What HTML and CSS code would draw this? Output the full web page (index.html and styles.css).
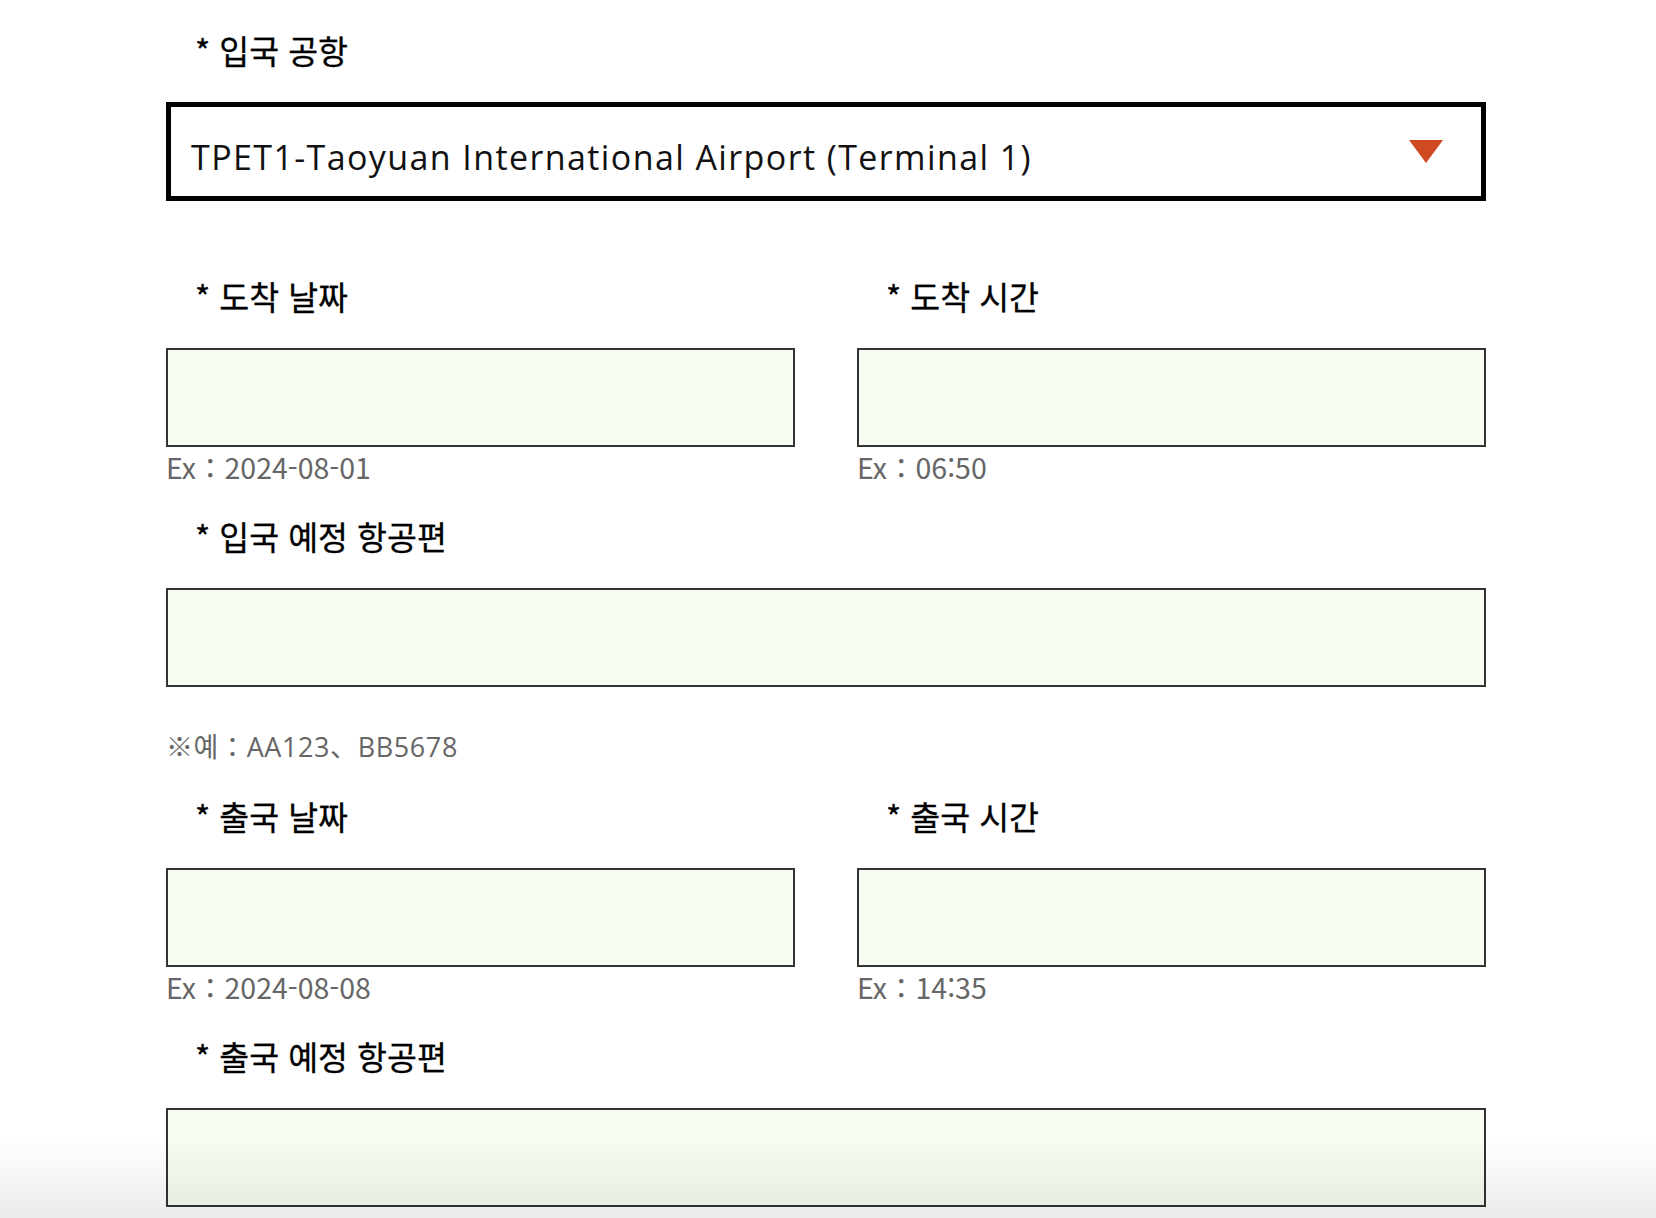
FILE: index.html
```html
<!DOCTYPE html>
<html lang="ko">
<head>
<meta charset="utf-8">
<title>입국 정보</title>
<link rel="stylesheet" href="styles.css">
</head>
<body>
<div class="form">
  <div class="field field-select">
    <div class="label">* 입국 공항</div>
    <div class="select">
      <span class="select-text">TPET1-Taoyuan International Airport (Terminal 1)</span>
      <svg class="arrow" width="34" height="23" viewBox="0 0 34 23"><polygon points="0,0 34,0 17,23" fill="#cf4a22"/></svg>
    </div>
  </div>

  <div class="row">
    <div class="field">
      <div class="label">* 도착 날짜</div>
      <div class="input"></div>
      <div class="hint">Ex：2024-08-01</div>
    </div>
    <div class="field">
      <div class="label">* 도착 시간</div>
      <div class="input"></div>
      <div class="hint">Ex：06:50</div>
    </div>
  </div>

  <div class="field">
    <div class="label">* 입국 예정 항공편</div>
    <div class="input"></div>
    <div class="note">※예：AA123、BB5678</div>
  </div>

  <div class="row">
    <div class="field">
      <div class="label">* 출국 날짜</div>
      <div class="input"></div>
      <div class="hint">Ex：2024-08-08</div>
    </div>
    <div class="field">
      <div class="label">* 출국 시간</div>
      <div class="input"></div>
      <div class="hint">Ex：14:35</div>
    </div>
  </div>

  <div class="field">
    <div class="label">* 출국 예정 항공편</div>
    <div class="input"></div>
  </div>
</div>
<div class="fade"></div>
</body>
</html>
```

FILE: styles.css
```css
html, body {
  margin: 0;
  padding: 0;
  background: #ffffff;
  overflow: hidden;
}

body {
  font-family: "Noto Sans CJK KR", "Noto Sans", sans-serif;
  color: #000;
}

.form {
  width: 1320px;
  margin-left: 166px;
  padding-top: 30px;
}

.field {
  margin-bottom: 31px;
}

.field-select {
  margin-bottom: 75px;
}

.label {
  font-family: "Noto Sans CJK KR", sans-serif;
  font-size: 32.5px;
  font-weight: 400;
  line-height: 40px;
  height: 40px;
  padding-left: 29px;
  margin-bottom: 32px;
  color: #000;
  white-space: nowrap;
  -webkit-text-stroke: 0.3px #000;
}

.select {
  box-sizing: border-box;
  height: 99px;
  border: 5px solid #000;
  background: #fff;
  display: flex;
  align-items: center;
  padding-left: 20px;
  padding-right: 38px;
}

.select-text {
  font-family: "Open Sans", "Noto Sans", sans-serif;
  font-size: 34px;
  letter-spacing: 1.4px;
  color: #111;
  padding-top: 10px;
  white-space: nowrap;
}

.arrow {
  margin-left: auto;
  display: block;
}

.row {
  display: grid;
  grid-template-columns: 1fr 1fr;
  column-gap: 62px;
}

.row .field {
  margin-bottom: 31px;
}

.input {
  box-sizing: border-box;
  height: 99px;
  border: 2px solid #333;
  background: #f7fdf3;
}

.hint {
  font-family: "Noto Sans CJK KR", sans-serif;
  font-size: 28.5px;
  line-height: 36px;
  margin-top: 2px;
  color: #666;
  white-space: nowrap;
}

.note {
  font-family: "Open Sans", "Noto Sans CJK KR", sans-serif;
  font-size: 27px;
  letter-spacing: 0.6px;
  line-height: 36px;
  margin-top: 42px;
  color: #666;
  white-space: nowrap;
}

.fade {
  position: fixed;
  left: 0;
  right: 0;
  bottom: 0;
  height: 80px;
  background: linear-gradient(to bottom, rgba(0,0,0,0) 0%, rgba(0,0,0,0.08) 100%);
  pointer-events: none;
}
```
